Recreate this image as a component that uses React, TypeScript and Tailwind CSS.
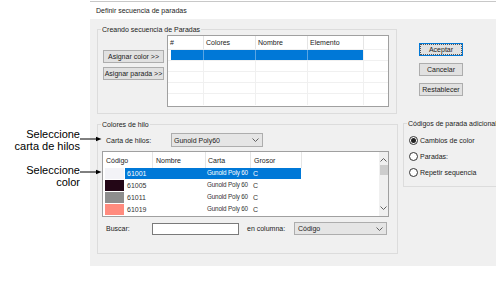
import React from "react";

const Chevron = ({ up = false }: { up?: boolean }) => (
  <svg width="7" height="4" viewBox="0 0 7 4" className="block">
    <path d={up ? "M0.5 3.5 L3.5 0.5 L6.5 3.5" : "M0.5 0.5 L3.5 3.5 L6.5 0.5"} fill="none" stroke="#606060" strokeWidth="1" />
  </svg>
);

const Arrow = () => (
  <svg width="22" height="6" viewBox="0 0 22 6" className="block">
    <line x1="0" y1="3" x2="19" y2="3" stroke="#000" strokeWidth="1" />
    <path d="M16 0.8 L21.5 3 L16 5.2 Z" fill="#000" />
  </svg>
);

const Btn = ({ label, focus = false }: { label: string; focus?: boolean }) => (
  <div
    className={
      "flex items-center justify-center h-[13px] bg-[#e1e1e1] border text-[7px] leading-none text-[#222] " +
      (focus ? "border-[#0078d7]" : "border-[#adadad]")
    }
  >
    {focus ? (
      <div className="flex items-center justify-center w-full h-full border border-dotted border-[#555]">{label}</div>
    ) : (
      label
    )}
  </div>
);

const Radio = ({ label, checked = false }: { label: string; checked?: boolean }) => (
  <div className="flex items-center h-[16px] pl-[5px]">
    <div className="w-[9px] h-[9px] rounded-full border border-[#333] bg-white flex items-center justify-center">
      {checked && <div className="w-[5px] h-[5px] rounded-full bg-[#222]" />}
    </div>
    <span className="ml-[2px] text-[7px] leading-none text-[#222] whitespace-nowrap">{label}</span>
  </div>
);

const Group = ({
  label,
  className,
  children,
}: {
  label: string;
  className: string;
  children?: React.ReactNode;
}) => (
  <div className={"relative border border-[#dcdcdc] shrink-0 " + className}>
    <span className="absolute -top-[5px] left-[3px] bg-[#f0f0f0] px-[1px] text-[7px] leading-[9px] text-[#222] whitespace-nowrap">
      {label}
    </span>
    {children}
  </div>
);

const swatchRows = [
  { code: "61001", color: "#f3f3f7", sel: true },
  { code: "61005", color: "#230616", sel: false },
  { code: "61011", color: "#8e8e8e", sel: false },
  { code: "61019", color: "#ff8b7e", sel: false },
];

export default function App() {
  return (
    <div className="w-[496px] h-[284px] bg-white flex overflow-hidden font-['Liberation_Sans',Arial,sans-serif]">
      {/* annotations */}
      <div className="w-[90px] shrink-0 flex flex-col pt-[128px] relative z-10">
        <div className="relative text-right pr-[10px] text-[11px] leading-[12px] text-black">
          <div>Seleccione</div>
          <div>carta de hilos</div>
          <div className="absolute left-[80px] top-[8px]">
            <Arrow />
          </div>
        </div>
        <div className="relative mt-[12px] text-right pr-[10px] text-[11px] leading-[12px] text-black">
          <div>Seleccione</div>
          <div>color</div>
          <div className="absolute left-[80px] top-[5px]">
            <Arrow />
          </div>
        </div>
      </div>

      {/* dialog */}
      <div className="w-[406px] shrink-0 flex flex-col">
        <div className="h-[1px] mt-[1px] bg-[#c8c8c8]" />
        <div className="h-[17px] bg-white flex items-center pl-[6px] text-[7px] leading-none text-[#222]">
          Definir secuencia de paradas
        </div>
        <div className="h-[247px] bg-[#f0f0f0] pl-[7px] pt-[10px] flex flex-col overflow-hidden">
          {/* top row */}
          <div className="flex">
            <Group label="Creando secuencia de Paradas" className="w-[300px] h-[85px]">
              <div className="flex pl-[5px] pt-[5px]">
                <div className="w-[61px] mt-[15px] flex flex-col gap-[4px]">
                  <Btn label="Asignar color >>" />
                  <Btn label="Asignar parada >>" />
                </div>
                <div className="ml-[3px] w-[222px] h-[72px] border border-[#a0a0a0] bg-white flex flex-col text-[7px] leading-none text-[#222]">
                  <div className="flex h-[14px] border-b border-[#f0f0f0]">
                    <div className="w-[36px] border-r border-[#e5e5e5] flex items-center pl-[2px]">#</div>
                    <div className="w-[52px] border-r border-[#e5e5e5] flex items-center pl-[2px]">Colores</div>
                    <div className="w-[52px] border-r border-[#e5e5e5] flex items-center pl-[2px]">Nombre</div>
                    <div className="w-[56px] border-r border-[#e5e5e5] flex items-center pl-[2px]">Elemento</div>
                    <div className="flex-1" />
                  </div>
                  <div className="flex h-[11px] border-b border-[#f0f0f0]">
                    <div className="w-[36px] border-r border-[#5aa5e3] pl-[3px]">
                      <div className="h-full bg-[#0078d7]" />
                    </div>
                    <div className="w-[52px] border-r border-[#5aa5e3] bg-[#0078d7]" />
                    <div className="w-[52px] border-r border-[#5aa5e3] bg-[#0078d7]" />
                    <div className="w-[56px] border-r border-[#f0f0f0] bg-[#0078d7]" />
                    <div className="flex-1" />
                  </div>
                  {[0, 1, 2, 3].map((i) => (
                    <div key={i} className="flex h-[11px] border-b border-[#f0f0f0] last:border-b-0">
                      <div className="w-[36px] border-r border-[#f0f0f0]" />
                      <div className="w-[52px] border-r border-[#f0f0f0]" />
                      <div className="w-[52px] border-r border-[#f0f0f0]" />
                      <div className="w-[56px] border-r border-[#f0f0f0]" />
                      <div className="flex-1" />
                    </div>
                  ))}
                </div>
              </div>
            </Group>
            <div className="ml-[22px] mt-[14px] w-[44px] flex flex-col gap-[7px]">
              <Btn label="Aceptar" focus />
              <Btn label="Cancelar" />
              <Btn label="Restablecer" />
            </div>
          </div>

          {/* bottom row */}
          <div className="flex mt-[10px]">
            <Group label="Colores de hilo" className="w-[301px] h-[130px]">
              <div className="flex items-center h-[14px] mt-[8px] text-[7px] leading-none text-[#222]">
                <div className="w-[73px] pl-[8px]">Carta de hilos:</div>
                <div className="w-[92px] h-[14px] bg-[#e5e5e5] border border-[#adadad] flex items-center justify-between pl-[2px] pr-[3px]">
                  <span>Gunold Poly60</span>
                  <Chevron />
                </div>
              </div>
              <div className="ml-[4px] mt-[4px] w-[287px] h-[66px] border border-[#a0a0a0] bg-white flex text-[7px] leading-none text-[#222]">
                <div className="w-[276px] flex flex-col">
                  <div className="flex h-[16px]">
                    <div className="w-[50px] border-r border-[#e5e5e5] flex items-center pl-[3px]">Código</div>
                    <div className="w-[53px] border-r border-[#e5e5e5] flex items-center pl-[3px]">Nombre</div>
                    <div className="w-[45px] border-r border-[#e5e5e5] flex items-center pl-[2px]">Carta</div>
                    <div className="w-[51px] border-r border-[#e5e5e5] flex items-center pl-[3px]">Grosor</div>
                    <div className="flex-1" />
                  </div>
                  {swatchRows.map((r) => (
                    <div key={r.code} className="flex h-[12px] items-start">
                      <div className="w-[19px] h-[11px] ml-[2px]" style={{ backgroundColor: r.color }} />
                      <div
                        className={
                          "ml-[1px] w-[176px] h-[11px] flex items-center whitespace-nowrap " +
                          (r.sel ? "bg-[#0078d7] text-white" : "text-[#333]")
                        }
                      >
                        <div className="w-[80px] pl-[2px]">{r.code}</div>
                        <div className="w-[46px] pl-[2px] text-[6.3px] tracking-[-0.15px]">Gunold Poly 60</div>
                        <div className="w-[50px] pl-[2px]">C</div>
                      </div>
                    </div>
                  ))}
                </div>
                <div className="w-[9px] bg-[#f0f0f0] flex flex-col items-center">
                  <div className="mt-[6px]">
                    <Chevron up />
                  </div>
                  <div className="mt-[3px] w-[8px] h-[10px] bg-[#cdcdcd]" />
                  <div className="mt-auto mb-[6px]">
                    <Chevron />
                  </div>
                </div>
              </div>
              <div className="flex items-center h-[13px] mt-[5px] text-[7px] leading-none text-[#222]">
                <div className="w-[54px] pl-[8px]">Buscar:</div>
                <div className="w-[87px] h-[12px] bg-white border border-[#7a7a7a]" />
                <div className="ml-[8px] w-[47px]">en columna:</div>
                <div className="w-[93px] h-[13px] bg-[#e5e5e5] border border-[#adadad] flex items-center justify-between pl-[3px] pr-[3px]">
                  <span>Código</span>
                  <Chevron />
                </div>
              </div>
            </Group>
            <Group label="Códigos de parada adicional co" className="ml-[5px] -mt-[1px] w-[120px] h-[64px]">
              <div className="pt-[8px] flex flex-col">
                <Radio label="Cambios de color" checked />
                <Radio label="Paradas:" />
                <Radio label="Repetir sequencia" />
              </div>
            </Group>
          </div>
        </div>
      </div>
    </div>
  );
}
